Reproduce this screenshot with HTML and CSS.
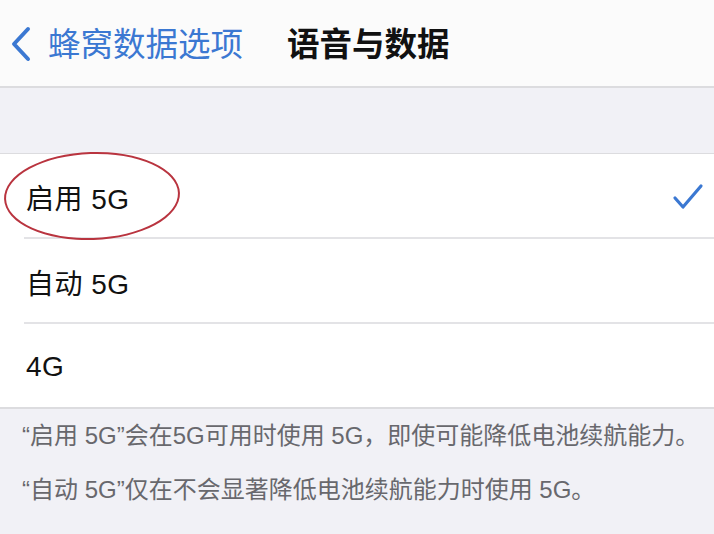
FILE: index.html
```html
<!DOCTYPE html>
<html lang="zh-CN">
<head>
<meta charset="utf-8">
<link rel="stylesheet" href="styles.css">
</head>
<body>
<div class="screen">
  <header class="nav">
    <div class="back">
      <svg class="chev" width="22" height="36" viewBox="0 0 22 36"><path d="M18 3 L4 18 L18 33" fill="none" stroke="#3b78d2" stroke-width="4" stroke-linecap="round" stroke-linejoin="round"/></svg>
      <span class="back-label">蜂窝数据选项</span>
    </div>
    <h1 class="title">语音与数据</h1>
  </header>
  <div class="spacer"></div>
  <ul class="group">
    <li class="row selected">
      <span class="label">启用 5G</span>
      <svg class="check" width="32" height="28" viewBox="0 0 32 28"><path d="M3 15 L11 24 L29 3" fill="none" stroke="#3b78d2" stroke-width="3.2" stroke-linecap="round" stroke-linejoin="round"/></svg>
      <span class="circle"></span>
    </li>
    <li class="row"><span class="label">自动 5G</span></li>
    <li class="row"><span class="label">4G</span></li>
  </ul>
  <div class="footer">
    <p>“启用 5G”会在5G可用时使用 5G，即使可能降低电池续航能力。</p>
    <p>“自动 5G”仅在不会显著降低电池续航能力时使用 5G。</p>
  </div>
</div>
</body>
</html>
```
FILE: styles.css
```css
* { box-sizing: border-box; margin: 0; padding: 0; }
html, body { width: 714px; height: 534px; overflow: hidden; }
body {
  font-family: "Liberation Sans", "Noto Sans CJK SC", sans-serif;
  background: #f1f1f6;
}
.screen { display: flex; flex-direction: column; height: 534px; }
.nav {
  height: 88px;
  background: #fbfbfb;
  border-bottom: 2px solid #dcdcdf;
  display: flex;
  align-items: center;
  padding: 4px 0 0 10px;
}
.back { display: flex; align-items: center; gap: 16px; color: #3b78d2; }
.chev { display: block; margin-top: -2px; }
.back-label { font-size: 32.5px; line-height: 1; font-weight: 400; }
.title {
  margin-left: 44px;
  font-size: 32.5px;
  font-weight: 700;
  color: #111;
  line-height: 1;
}
.spacer { height: 66px; background: #f1f1f6; border-bottom: 1px solid #dcdcdf; }
.group { list-style: none; background: #fff; border-bottom: 2px solid #dcdcdf; }
.row {
  position: relative;
  height: 85px;
  margin-left: 24px;
  padding-right: 10px;
  padding-top: 3px;
  display: flex;
  align-items: center;
  justify-content: space-between;
  border-bottom: 2px solid #e3e3e6;
}
.row:last-child { border-bottom: none; height: 83px; }
.label { font-size: 28px; color: #111; margin-left: 2px; letter-spacing: 0.5px; }
.check { display: block; }
.circle {
  position: absolute;
  left: -20px;
  top: -2px;
  width: 176px;
  height: 88px;
  border: 2px solid #b9343f;
  border-radius: 50%;
  transform: rotate(-2deg);
  pointer-events: none;
}
.footer { padding: 0 10px 0 22px; color: #68686d; font-size: 24px; }
.footer p { line-height: 54px; white-space: nowrap; }
```
